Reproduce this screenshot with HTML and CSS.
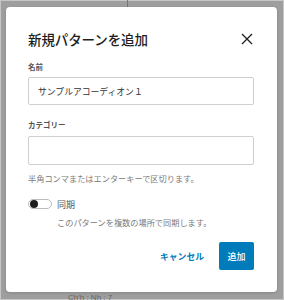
FILE: index.html
```html
<!DOCTYPE html>
<html lang="ja">

<head>
    <meta charset="UTF-8">
    <meta name="viewport" content="width=device-width, initial-scale=1.0">
    <title>新規パターンを追加</title>
    <link rel="stylesheet" href="styles.css">
</head>

<body>

    <!-- dimmed page behind the dialog -->
    <div class="overlay">
        <span class="behind-line"></span>
        <span class="behind-text">Ch'h : Nh : 7</span>

        <!-- dialog -->
        <div class="modal">
            <div class="modal-header">
                <h1 class="modal-title">新規パターンを追加</h1>
                <button class="close" aria-label="閉じる">
                    <svg width="12" height="12" viewBox="0 0 12 12">
                        <path d="M1 1 L11 11 M11 1 L1 11" stroke="#1e1e1e" stroke-width="1.3" fill="none" />
                    </svg>
                </button>
            </div>

            <div class="field">
                <label class="label" for="name">名前</label>
                <input type="text" id="name" class="text-input" value="サンプルアコーディオン１">
            </div>

            <div class="field field-category">
                <label class="label" for="category">カテゴリー</label>
                <input type="text" id="category" class="text-input">
                <p class="help">半角コンマまたはエンターキーで区切ります。</p>
            </div>

            <div class="toggle-field">
                <div class="toggle-row">
                    <span class="toggle"><span class="knob"></span></span>
                    <span class="toggle-label">同期</span>
                </div>
                <p class="help toggle-help">このパターンを複数の場所で同期します。</p>
            </div>

            <div class="actions">
                <button class="btn-link">キャンセル</button>
                <button class="btn-primary">追加</button>
            </div>
        </div>
    </div>

</body>

</html>
```

FILE: styles.css
```css
* {
    margin: 0;
    padding: 0;
    box-sizing: border-box;
}

html,
body {
    width: 100%;
    height: 100%;
}

body {
    font-family: "Noto Sans CJK JP", "Noto Sans", sans-serif;
    color: #1e1e1e;
}

.overlay {
    position: relative;
    height: 100%;
    background-color: #9e9e9e;
    box-shadow: inset 0 0 0 1px #c6c6c6;
    padding: 7px 7px 0 6px;
    overflow: hidden;
}

.overlay .behind-line {
    position: absolute;
    left: 127px;
    top: 0;
    width: 1px;
    height: 7px;
    background-color: #777;
}

.overlay .behind-text {
    position: absolute;
    left: 68px;
    top: 293px;
    font-family: "Liberation Sans", sans-serif;
    font-size: 8px;
    color: #666;
}

.modal {
    position: relative;
    width: 271px;
    height: 285px;
    background-color: #fff;
    border-radius: 4px;
    box-shadow: 0 1px 3px rgba(0, 0, 0, 0.15);
    padding: 24px 23px 22px 22px;
    display: flex;
    flex-direction: column;
}

.modal-header {
    display: flex;
    justify-content: space-between;
    align-items: center;
    height: 16px;
}

.modal-title {
    font-size: 13.5px;
    line-height: 16px;
    font-weight: 500;
    letter-spacing: -0.1px;
}

.close {
    background: none;
    border: none;
    display: flex;
    margin-right: 1px;
}

.field {
    display: flex;
    flex-direction: column;
    margin-top: 15px;
}

.label {
    font-size: 7.5px;
    line-height: 10px;
    font-weight: 600;
    color: #555;
    margin-bottom: 5px;
}

.text-input {
    height: 28px;
    border: 1px solid #cfcfcf;
    border-radius: 2px;
    padding: 0 9px;
    font-family: inherit;
    font-size: 8.8px;
    color: #333;
    outline: none;
}

.field-category .label {
    margin-bottom: 6px;
}

.field-category .text-input {
    height: 29px;
}

.help {
    font-size: 8.2px;
    line-height: 11px;
    color: #7a7a7a;
    margin-top: 8px;
}

.toggle-field {
    margin-top: 14px;
}

.toggle-row {
    display: flex;
    align-items: center;
    height: 12px;
}

.toggle {
    display: flex;
    align-items: center;
    width: 24px;
    height: 10px;
    border: 1px solid #bbb;
    border-radius: 5px;
    padding-left: 1px;
}

.knob {
    width: 8px;
    height: 8px;
    border-radius: 50%;
    background-color: #1e1e1e;
}

.toggle-label {
    font-size: 9px;
    color: #555;
    margin-left: 5px;
}

.toggle-help {
    margin-top: 7px;
    padding-left: 29px;
}

.actions {
    display: flex;
    justify-content: flex-end;
    align-items: center;
    gap: 15px;
    margin-top: 14px;
}

.btn-link {
    background: none;
    border: none;
    font-family: inherit;
    font-size: 8.8px;
    font-weight: 600;
    color: #007cba;
}

.btn-primary {
    width: 35px;
    height: 28px;
    border: none;
    border-radius: 2px;
    background-color: #007cba;
    color: #fff;
    font-family: inherit;
    font-size: 9px;
    font-weight: 500;
}
```
